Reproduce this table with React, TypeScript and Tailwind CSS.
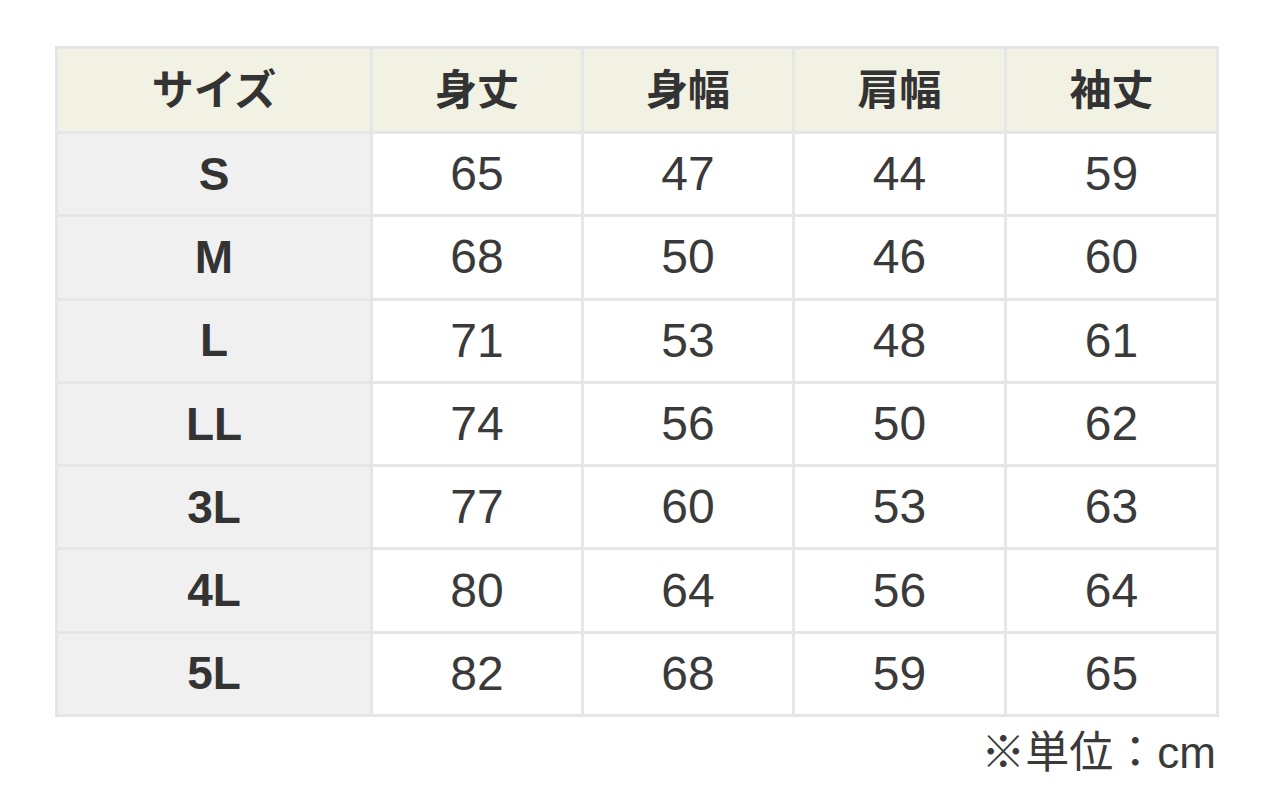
const headers = ['身丈', '身幅', '肩幅', '袖丈'];

const rows: [string, number[]][] = [
  ['S', [65, 47, 44, 59]],
  ['M', [68, 50, 46, 60]],
  ['L', [71, 53, 48, 61]],
  ['LL', [74, 56, 50, 62]],
  ['3L', [77, 60, 53, 63]],
  ['4L', [80, 64, 56, 64]],
  ['5L', [82, 68, 59, 65]],
];

export default function App() {
  return (
    <div className="min-h-screen bg-white pt-[46px] pl-[55px] font-['Liberation_Sans','Noto_Sans_CJK_JP',sans-serif] text-[#333]">
      <table className="w-[1161px] border-collapse table-fixed">
        <colgroup>
          <col className="w-[315px]" />
          <col className="w-[211px]" />
          <col className="w-[211px]" />
          <col className="w-[212px]" />
          <col className="w-[212px]" />
        </colgroup>
        <thead>
          <tr className="h-[85px] bg-[#f1f1e4]">
            <th className="border-[3px] border-[#e6e6e6] text-[42px] font-bold">サイズ</th>
            {headers.map((h) => (
              <th key={h} className="border-[3px] border-[#e6e6e6] text-[42px] font-bold">
                {h}
              </th>
            ))}
          </tr>
        </thead>
        <tbody>
          {rows.map(([size, vals]) => (
            <tr key={size} className="h-[83.3px]">
              <td className="border-[3px] border-[#e6e6e6] bg-[#f0f0f0] text-center text-[46px] font-bold">
                {size}
              </td>
              {vals.map((v, i) => (
                <td key={i} className="border-[3px] border-[#e6e6e6] bg-white text-center text-[48px] text-[#3a3a3a]">
                  {v}
                </td>
              ))}
            </tr>
          ))}
        </tbody>
      </table>
      <div className="w-[1161px] text-right text-[44px] leading-none mt-[14px] text-[#3a3a3a]">※単位：cm</div>
    </div>
  );
}
